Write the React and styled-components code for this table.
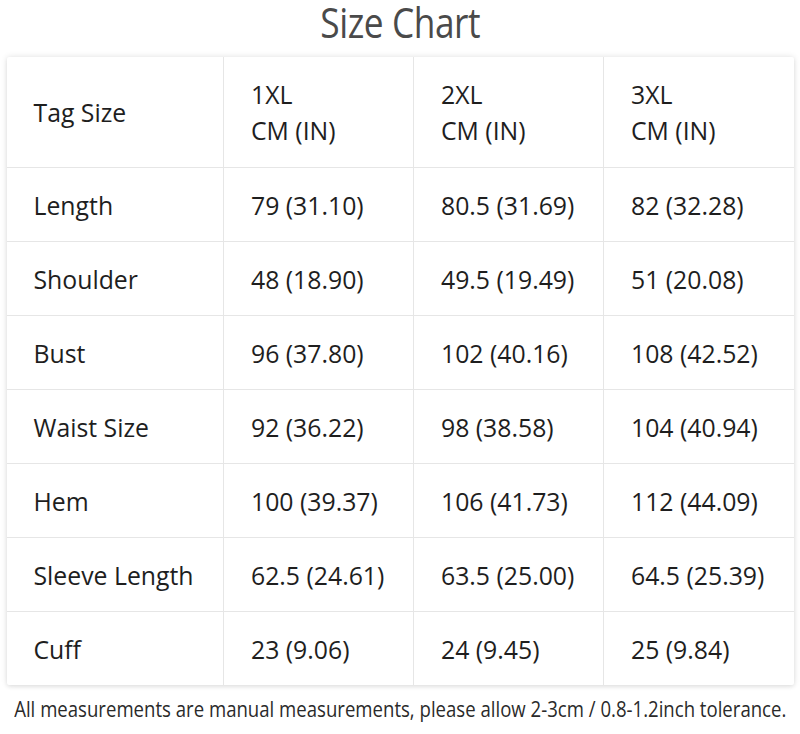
import React from "react";
import styled, { createGlobalStyle } from "styled-components";

const Global = createGlobalStyle`
  html, body { margin: 0; padding: 0; background: #fff; }
  body { font-family: "Open Sans", "Noto Sans", sans-serif; }
`;

const Page = styled.div`
  width: 800px;
  height: 734px;
  display: flex;
  flex-direction: column;
  align-items: center;
  background: #fff;
`;

const Title = styled.h1`
  margin: 0 0 7px;
  font-family: "Open Sans", sans-serif;
  font-weight: 400;
  font-size: 42px;
  line-height: 50px;
  height: 50px;
  padding-bottom: 0;
  color: #4a4a4a;
  letter-spacing: -0.5px;
  transform: scaleX(0.84) translateY(-3px);
`;

const Card = styled.div`
  width: 787px;
  background: #fff;
  box-shadow: 0 0 6px rgba(0, 0, 0, 0.12), 0 2px 4px rgba(0, 0, 0, 0.06);
  border-radius: 2px;
`;

const Table = styled.table`
  width: 100%;
  border-collapse: collapse;
  table-layout: fixed;
`;

const Cell = styled.td`
  padding: 0 0 0 27px;
  height: ${(p) => (p.$head ? 110 : 73)}px;
  border-left: ${(p) => (p.$first ? "none" : "1px solid #e6e6e6")};
  border-top: ${(p) => (p.$top ? "none" : "1px solid #e6e6e6")};
  font-size: 24.8px;
  line-height: 36px;
  color: #1e1e1e;
  vertical-align: middle;
  white-space: nowrap;
`;

const Footer = styled.p`
  margin: 11px 0 0;
  font-family: "Open Sans", sans-serif;
  font-size: 21px;
  line-height: 26px;
  color: #2a2a2a;
  white-space: nowrap;
  transform: scaleX(0.885);
`;

const sizes = ["1XL", "2XL", "3XL"];
const rows = [
  ["Length", "79 (31.10)", "80.5 (31.69)", "82 (32.28)"],
  ["Shoulder", "48 (18.90)", "49.5 (19.49)", "51 (20.08)"],
  ["Bust", "96 (37.80)", "102 (40.16)", "108 (42.52)"],
  ["Waist Size", "92 (36.22)", "98 (38.58)", "104 (40.94)"],
  ["Hem", "100 (39.37)", "106 (41.73)", "112 (44.09)"],
  ["Sleeve Length", "62.5 (24.61)", "63.5 (25.00)", "64.5 (25.39)"],
  ["Cuff", "23 (9.06)", "24 (9.45)", "25 (9.84)"],
];

export default function App() {
  return (
    <Page>
      <Global />
      <Title>Size Chart</Title>
      <Card>
        <Table>
          <colgroup>
            <col style={{ width: 217 }} />
            <col style={{ width: 190 }} />
            <col style={{ width: 190 }} />
            <col style={{ width: 190 }} />
          </colgroup>
          <tbody>
            <tr>
              <Cell $head $top $first>Tag Size</Cell>
              {sizes.map((s) => (
                <Cell key={s} $head $top>
                  {s}
                  <br />
                  CM (IN)
                </Cell>
              ))}
            </tr>
            {rows.map((r) => (
              <tr key={r[0]}>
                {r.map((c, i) => (
                  <Cell key={i} $first={i === 0}>{c}</Cell>
                ))}
              </tr>
            ))}
          </tbody>
        </Table>
      </Card>
      <Footer>
        All measurements are manual measurements, please allow 2-3cm / 0.8-1.2inch tolerance.
      </Footer>
    </Page>
  );
}
